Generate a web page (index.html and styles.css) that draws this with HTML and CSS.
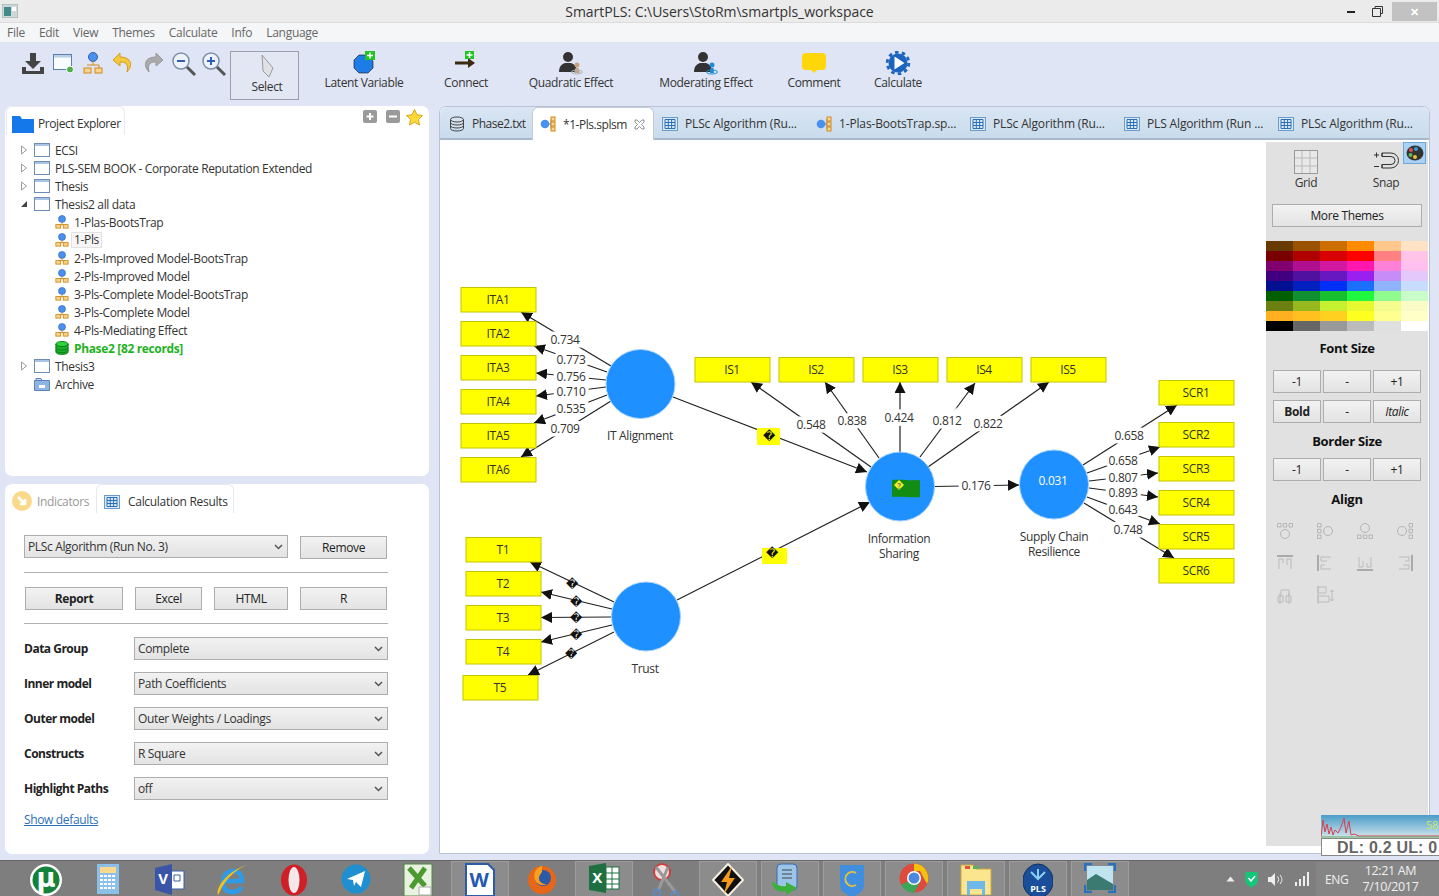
FILE: index.html
```html
<!DOCTYPE html>
<html lang="en">
<head>
<meta charset="utf-8">
<title>SmartPLS</title>
<link rel="stylesheet" href="styles.css">
</head>
<body>
<svg class="defs" width="0" height="0" aria-hidden="true">
  <defs>
    <symbol id="i-project" viewBox="0 0 16 14"><rect x=".5" y=".5" width="15" height="13" fill="#fff" stroke="#6d8db5"/><rect x="1" y="1" width="14" height="2" fill="#a9c4e4"/></symbol>
    <symbol id="i-model" viewBox="0 0 16 16"><circle cx="8" cy="4.5" r="4" fill="#4a90ee" stroke="#2d62b0" stroke-width=".7"/><path d="M8 8v3M3.500 11h9" stroke="#c8861e" fill="none"/><rect x="1" y="11" width="5.5" height="4" fill="#fbd38a" stroke="#d08a1a"/><rect x="9.500" y="11" width="5.5" height="4" fill="#fbd38a" stroke="#d08a1a"/></symbol>
    <symbol id="i-side" viewBox="0 0 16 16"><circle cx="5" cy="8" r="4.300" fill="#4a90ee"/><path d="M9 8h2M11 3v10" stroke="#888" fill="none"/><rect x="11" y="1" width="4" height="4" fill="#fbd38a" stroke="#d08a1a"/><rect x="11" y="6" width="4" height="4" fill="#fbd38a" stroke="#d08a1a"/><rect x="11" y="11" width="4" height="4" fill="#fbd38a" stroke="#d08a1a"/></symbol>
    <symbol id="i-table" viewBox="0 0 16 16"><rect x=".5" y="1.500" width="15" height="13" fill="#dbe9f6" stroke="#6d9cc8"/><path d="M3 3.500h10v9H3zM3 6.500h10M3 9.500h10M6.300 3.500v9M9.600 3.500v9" fill="none" stroke="#2a70b8"/></symbol>
    <symbol id="i-db" viewBox="0 0 16 16"><ellipse cx="8" cy="3.500" rx="6.500" ry="2.500" fill="none" stroke="#444"/><path d="M1.500 3.500v9c0 3.300 13 3.300 13 0v-9M1.500 6.500c0 3.300 13 3.300 13 0M1.500 9.500c0 3.300 13 3.300 13 0" fill="none" stroke="#444"/></symbol>
    <symbol id="i-dbgreen" viewBox="0 0 16 16"><ellipse cx="8" cy="3.500" rx="7" ry="3" fill="#2fd43a" stroke="#0c7a18"/><path d="M1 3.500v9c0 3.800 14 3.800 14 0v-9c0 3.800-14 3.800-14 0z" fill="#18b02a" stroke="#0c7a18"/><path d="M1 7.500c0 3.800 14 3.800 14 0M1 10.500c0 3.800 14 3.800 14 0" fill="none" stroke="#0c7a18"/></symbol>
    <symbol id="i-person" viewBox="0 0 24 24"><circle cx="9" cy="6" r="5" fill="#333"/><path d="M0 21c0-6 3-8 6-9h6c3 1 6 3 6 9z" fill="#333"/></symbol>
    <symbol id="i-alignnode" viewBox="0 0 20 20"><path d="M2.500 2.500h3.500v3.500H2.500zM8.200 2.500h3.500v3.500H8.200zM14 2.500h3.500v3.500H14z" fill="none" stroke="#b5b5b5"/><circle cx="10" cy="13" r="4.500" fill="none" stroke="#b5b5b5"/></symbol>
    <symbol id="i-alignbar" viewBox="0 0 20 20"><path d="M2 3h16" stroke="#aaa" stroke-width="2"/><path d="M4 16V6h4v4M12 12V6h4v10" fill="none" stroke="#bbb"/></symbol>
  </defs>
</svg>
<div class="app">
  <header class="title">
    <svg class="appicon" width="16" height="14" viewBox="0 0 16 14"><rect width="16" height="14" fill="#cfd8d8" stroke="#9aa"/><rect x="2" y="3" width="7" height="9" fill="#3f8a8a"/><rect x="10" y="3" width="4" height="4" fill="#fff"/></svg>
    <span class="title-text">SmartPLS: C:\Users\StoRm\smartpls_workspace</span>
    <div class="winctl">
      <span class="min"></span>
      <svg class="restore" width="11" height="11" viewBox="0 0 11 11"><path d="M3 2.500V.5h7.500v7H8.500M.5 2.500h8v8h-8z" fill="none" stroke="#333"/></svg>
      <span class="close">✕</span>
    </div>
  </header>
  <nav class="menu"><span>File</span><span>Edit</span><span>View</span><span>Themes</span><span>Calculate</span><span>Info</span><span>Language</span></nav>
  <div class="toolbar">
    <div class="small-tools">
      <svg class="st" width="24" height="24" viewBox="0 0 24 24"><path d="M9 2h6v8h5l-8 8-8-8h5zM1 16h4v4h14v-4h4v7H1z" fill="#444"/></svg>
      <svg class="st" width="24" height="24" viewBox="0 0 24 24"><rect x="2.500" y="3.500" width="18" height="15" fill="#f8fbff" stroke="#5d7fb0"/><rect x="3" y="4" width="17" height="2.500" fill="#b9cfe8"/><circle cx="19" cy="18.500" r="3.500" fill="#4fae4a" stroke="#fff"/></svg>
      <svg class="st" width="24" height="24" viewBox="0 0 24 24"><circle cx="12" cy="6" r="4.500" fill="#4a90ee" stroke="#2d62b0"/><path d="M12 10v4M6 14h12v3" fill="none" stroke="#d08a1a"/><rect x="3" y="17" width="7" height="5" fill="#fbd38a" stroke="#d08a1a"/><rect x="14" y="17" width="7" height="5" fill="#fbd38a" stroke="#d08a1a"/></svg>
      <svg class="st" width="24" height="24" viewBox="0 0 24 24"><path d="M9 2 2 9l7 6v-4c5 0 9 1 7 10 6-6 5-15-7-15z" fill="#f3c93f" stroke="#d59b1f"/></svg>
      <svg class="st" width="24" height="24" viewBox="0 0 24 24"><path d="M15 2l7 7-7 6v-4c-5 0-9 1-7 10-6-6-5-15 7-15z" fill="#aaa" stroke="#999"/></svg>
      <svg class="st" width="26" height="26" viewBox="0 0 26 26"><circle cx="11" cy="10" r="8" fill="#eef3fb" stroke="#7b8fa8" stroke-width="1.500"/><path d="M7 10h8" stroke="#2f5fb0" stroke-width="2"/><path d="M17 16l8 8" stroke="#555" stroke-width="3"/></svg>
      <svg class="st" width="26" height="26" viewBox="0 0 26 26"><circle cx="11" cy="10" r="8" fill="#eef3fb" stroke="#7b8fa8" stroke-width="1.500"/><path d="M7 10h8M11 6v8" stroke="#2f5fb0" stroke-width="2"/><path d="M17 16l8 8" stroke="#555" stroke-width="3"/></svg>
    </div>
    <button class="select-btn">
      <svg width="16" height="24" viewBox="0 0 16 24"><path d="M3 1l11 13-4 9-6-6z" fill="#dfe1e6" stroke="#9a9a9a"/></svg>
      <span>Select</span>
    </button>
    <div class="tool w130">
      <svg width="24" height="24" viewBox="0 0 24 24"><path d="M7 4h8l6 6v7l-5 5H7l-5-5v-8z" fill="#1e7ce8" stroke="#111" stroke-width=".6"/><rect x="13" y="0" width="10" height="9" fill="#22c422"/><path d="M18 1.500v6M15 4.500h6" stroke="#fff" stroke-width="1.500"/></svg>
      <span>Latent Variable</span>
    </div>
    <div class="tool w74">
      <svg width="24" height="24" viewBox="0 0 24 24"><path d="M1 12h14" stroke="#3a2a10" stroke-width="3"/><path d="M14 7l7 5-7 5z" fill="#3a2a10"/><rect x="11" y="0" width="9" height="8" fill="#22c422"/><path d="M15.500 1v6M12.500 4h6" stroke="#fff" stroke-width="1.500"/></svg>
      <span>Connect</span>
    </div>
    <div class="tool w136">
      <svg width="24" height="24" viewBox="0 0 24 24"><use href="#i-person"/><circle cx="18" cy="14" r="2.500" fill="#c9a37a"/><path d="M15 22l1.500-5h3L21 22z" fill="#c9a37a"/><ellipse cx="18" cy="21" rx="5.500" ry="2" fill="none" stroke="#a0b8d0"/></svg>
      <span>Quadratic Effect</span>
    </div>
    <div class="tool w134">
      <svg width="24" height="24" viewBox="0 0 24 24"><use href="#i-person"/><circle cx="18" cy="14" r="2.500" fill="#1e8ad8"/><path d="M16 22l.5-5h3l.5 5z" fill="#1e8ad8"/><ellipse cx="18" cy="21" rx="5.500" ry="2" fill="none" stroke="#1e8ad8"/></svg>
      <span>Moderating Effect</span>
    </div>
    <div class="tool w82">
      <svg width="26" height="24" viewBox="0 0 26 24"><path d="M5 2h16a4 4 0 0 1 4 4v9a4 4 0 0 1-4 4h-5l-3 3-3-3H5a4 4 0 0 1-4-4V6a4 4 0 0 1 4-4z" fill="#ffd60a"/></svg>
      <span>Comment</span>
    </div>
    <div class="tool w86">
      <svg width="26" height="24" viewBox="0 0 26 24"><circle cx="13" cy="12" r="9.500" fill="#1b64c0"/><circle cx="13" cy="12" r="10.800" fill="none" stroke="#1b64c0" stroke-width="2.800" stroke-dasharray="3.500 3.300"/><path d="M9.500 5.500l10 6.500-10 6.500z" fill="#fff"/></svg>
      <span>Calculate</span>
    </div>
  </div>
  <main class="workspace">
    <div class="leftcol">
      <section class="panel">
        <div class="panel-head">
          <div class="ptab">
            <svg width="22" height="18" viewBox="0 0 22 18"><path d="M0 1h8l2 3h12v14H0z" fill="#1478ea"/></svg>
            <span>Project Explorer</span>
          </div>
          <div class="ptools">
            <svg width="14" height="14" viewBox="0 0 14 14"><rect width="14" height="13" rx="2" fill="#9a9a9a"/><path d="M7 3v7M3.500 6.500h7" stroke="#fff" stroke-width="2"/></svg>
            <svg width="14" height="14" viewBox="0 0 14 14"><rect width="14" height="13" rx="2" fill="#9a9a9a"/><path d="M3 6.500h8" stroke="#fff" stroke-width="2"/></svg>
            <svg width="17" height="17" viewBox="0 0 17 17"><path d="M8.500.5l2.500 5.300 5.500.7-4 4 1 5.500-5-2.700-5 2.700 1-5.500-4-4 5.500-.7z" fill="#ffd83a" stroke="#d8a818"/></svg>
          </div>
        </div>
        <ul class="tree">
          <li class="row"><svg class="tw" width="8" height="10" viewBox="0 0 8 10"><path d="M1.500 1l5 4-5 4z" fill="#fff" stroke="#999"/></svg><svg class="ic" width="16" height="14"><use href="#i-project"/></svg><span>ECSI</span></li>
          <li class="row"><svg class="tw" width="8" height="10" viewBox="0 0 8 10"><path d="M1.500 1l5 4-5 4z" fill="#fff" stroke="#999"/></svg><svg class="ic" width="16" height="14"><use href="#i-project"/></svg><span>PLS-SEM BOOK - Corporate Reputation Extended</span></li>
          <li class="row"><svg class="tw" width="8" height="10" viewBox="0 0 8 10"><path d="M1.500 1l5 4-5 4z" fill="#fff" stroke="#999"/></svg><svg class="ic" width="16" height="14"><use href="#i-project"/></svg><span>Thesis</span></li>
          <li class="row"><svg class="tw" width="8" height="10" viewBox="0 0 8 10"><path d="M7 2v6H1z" fill="#444"/></svg><svg class="ic" width="16" height="14"><use href="#i-project"/></svg><span>Thesis2 all data</span></li>
          <li class="row child"><svg class="ic" width="14" height="14"><use href="#i-model"/></svg><span>1-Plas-BootsTrap</span></li>
          <li class="row child"><svg class="ic" width="14" height="14"><use href="#i-model"/></svg><span class="picked">1-Pls</span></li>
          <li class="row child"><svg class="ic" width="14" height="14"><use href="#i-model"/></svg><span>2-Pls-Improved Model-BootsTrap</span></li>
          <li class="row child"><svg class="ic" width="14" height="14"><use href="#i-model"/></svg><span>2-Pls-Improved Model</span></li>
          <li class="row child"><svg class="ic" width="14" height="14"><use href="#i-model"/></svg><span>3-Pls-Complete Model-BootsTrap</span></li>
          <li class="row child"><svg class="ic" width="14" height="14"><use href="#i-model"/></svg><span>3-Pls-Complete Model</span></li>
          <li class="row child"><svg class="ic" width="14" height="14"><use href="#i-model"/></svg><span>4-Pls-Mediating Effect</span></li>
          <li class="row child dataset"><svg class="ic" width="14" height="14"><use href="#i-dbgreen"/></svg><span>Phase2 [82 records]</span></li>
          <li class="row"><svg class="tw" width="8" height="10" viewBox="0 0 8 10"><path d="M1.500 1l5 4-5 4z" fill="#fff" stroke="#999"/></svg><svg class="ic" width="16" height="14"><use href="#i-project"/></svg><span>Thesis3</span></li>
          <li class="row nest"><svg class="ic" width="16" height="14" viewBox="0 0 16 14"><path d="M.5 3.500h15v10H.5z" fill="#8fb4e4" stroke="#5d82b8"/><path d="M2 1.500h5l1 2H2z" fill="#c4d8f0" stroke="#5d82b8"/><path d="M5 8h6v3H5z" fill="#fff"/></svg><span>Archive</span></li>
        </ul>
      </section>
      <section class="panel">
        <div class="panel-head">
          <div class="gtab">
            <svg width="20" height="20" viewBox="0 0 20 20"><circle cx="10" cy="10" r="10" fill="#fbd98a"/><path d="M6 6l7 7M13 8v5H8" stroke="#fff" stroke-width="2.500" fill="none"/></svg>
            <span>Indicators</span>
          </div>
          <div class="ptab calc">
            <svg width="16" height="16"><use href="#i-table"/></svg>
            <span>Calculation Results</span>
          </div>
        </div>
        <div class="form">
          <div class="frow top">
            <div class="sel wide"><span>PLSc Algorithm (Run No. 3)</span><svg width="9" height="6" viewBox="0 0 9 6"><path d="M1 1l3.500 3.500L8 1" fill="none" stroke="#555" stroke-width="1.500"/></svg></div>
            <button class="btn rm">Remove</button>
          </div>
          <hr class="rule first">
          <div class="frow actions">
            <button class="btn report">Report</button>
            <button class="btn excel">Excel</button>
            <button class="btn html">HTML</button>
            <button class="btn r">R</button>
          </div>
          <hr class="rule second">
          <div class="opts">
            <div class="opt"><label>Data Group</label><div class="sel"><span>Complete</span><svg width="9" height="6" viewBox="0 0 9 6"><path d="M1 1l3.500 3.500L8 1" fill="none" stroke="#555" stroke-width="1.500"/></svg></div></div>
            <div class="opt"><label>Inner model</label><div class="sel"><span>Path Coefficients</span><svg width="9" height="6" viewBox="0 0 9 6"><path d="M1 1l3.500 3.500L8 1" fill="none" stroke="#555" stroke-width="1.500"/></svg></div></div>
            <div class="opt"><label>Outer model</label><div class="sel"><span>Outer Weights / Loadings</span><svg width="9" height="6" viewBox="0 0 9 6"><path d="M1 1l3.500 3.500L8 1" fill="none" stroke="#555" stroke-width="1.500"/></svg></div></div>
            <div class="opt"><label>Constructs</label><div class="sel"><span>R Square</span><svg width="9" height="6" viewBox="0 0 9 6"><path d="M1 1l3.500 3.500L8 1" fill="none" stroke="#555" stroke-width="1.500"/></svg></div></div>
            <div class="opt"><label>Highlight Paths</label><div class="sel"><span>off</span><svg width="9" height="6" viewBox="0 0 9 6"><path d="M1 1l3.500 3.500L8 1" fill="none" stroke="#555" stroke-width="1.500"/></svg></div></div>
          </div>
          <a class="defaults" href="#">Show defaults</a>
        </div>
      </section>
    </div>
    <section class="editor">
      <div class="tabs">
        <div class="tab t1"><svg width="16" height="16"><use href="#i-db"/></svg><span>Phase2.txt</span></div>
        <div class="tab active"><svg width="16" height="16"><use href="#i-side"/></svg><span>*1-Pls.splsm</span><svg class="x" width="11" height="11" viewBox="0 0 11 11"><path d="M1 1h2l2.500 2.500L8 1h2v2L7.500 5.500 10 8v2H8L5.500 7.500 3 10H1V8l2.500-2.500L1 3z" fill="#fff" stroke="#777" stroke-width=".8"/></svg></div>
        <div class="tab"><svg width="16" height="16"><use href="#i-table"/></svg><span>PLSc Algorithm (Ru...</span></div>
        <div class="tab"><svg width="16" height="16"><use href="#i-side"/></svg><span>1-Plas-BootsTrap.sp...</span></div>
        <div class="tab"><svg width="16" height="16"><use href="#i-table"/></svg><span>PLSc Algorithm (Ru...</span></div>
        <div class="tab"><svg width="16" height="16"><use href="#i-table"/></svg><span>PLS Algorithm (Run ...</span></div>
        <div class="tab"><svg width="16" height="16"><use href="#i-table"/></svg><span>PLSc Algorithm (Ru...</span></div>
      </div>
      <div class="editor-body">
        <svg class="canvas" width="826" height="714" viewBox="440 140 826 714">
          <defs>
            <marker id="ah" markerUnits="userSpaceOnUse" markerWidth="12" markerHeight="11" refX="11" refY="5.500" orient="auto"><path d="M0 0l11 5.500L0 11z" fill="#111"/></marker>
          </defs>
          <g class="links">
            <line x1="611" y1="366" x2="521" y2="312"/><line x1="607" y1="372" x2="534" y2="346"/><line x1="606" y1="380" x2="536" y2="373"/><line x1="606" y1="387" x2="536" y2="396"/><line x1="607" y1="395" x2="534" y2="423"/><line x1="611" y1="401" x2="521" y2="457"/>
            <line x1="673" y1="397" x2="867" y2="472"/>
            <line x1="871" y1="467" x2="751" y2="382"/><line x1="879" y1="458" x2="825" y2="382"/><line x1="900" y1="452" x2="900" y2="382"/><line x1="920" y1="457" x2="975" y2="383"/><line x1="928" y1="467" x2="1049" y2="382"/>
            <line x1="935" y1="486.500" x2="1019" y2="485"/>
            <line x1="1083" y1="465" x2="1177" y2="405"/><line x1="1087" y1="473" x2="1160" y2="447"/><line x1="1089" y1="481" x2="1158" y2="473"/><line x1="1089" y1="488" x2="1158" y2="497"/><line x1="1087" y1="497" x2="1160" y2="524"/><line x1="1084" y1="503" x2="1174" y2="558"/>
            <line x1="614" y1="602" x2="530" y2="562"/><line x1="612" y1="609" x2="541" y2="592"/><line x1="611" y1="617" x2="541" y2="617.500"/><line x1="612" y1="625" x2="541" y2="642"/><line x1="614" y1="632" x2="528" y2="675"/>
            <line x1="677" y1="600" x2="870" y2="502"/>
          </g>
          <g class="nodes">
            <circle cx="640.500" cy="384" r="34.500"/><circle cx="900" cy="486.500" r="34.500"/><circle cx="1054" cy="484.500" r="34.500"/><circle cx="646" cy="616.500" r="34.500"/>
          </g>
          <path class="flag" d="M892 480c9-1 18 1 28 0v17c-10 1-19-1-28 0z"/>
          <path class="flagmark" d="M899 480l5 5-5 5-5-5z"/>
          <text class="flagq" x="899" y="485">?</text>
          <g class="boxes">
            <rect x="461" y="287.500" width="75" height="24.500"/><rect x="461" y="321.500" width="75" height="24.500"/><rect x="461" y="355.500" width="75" height="24.500"/><rect x="461" y="389.500" width="75" height="24.500"/><rect x="461" y="423.500" width="75" height="24.500"/><rect x="461" y="457.500" width="75" height="24.500"/>
            <rect x="695" y="357.500" width="75" height="24.500"/><rect x="779" y="357.500" width="75" height="24.500"/><rect x="863" y="357.500" width="75" height="24.500"/><rect x="947" y="357.500" width="75" height="24.500"/><rect x="1031" y="357.500" width="75" height="24.500"/>
            <rect x="1159" y="380.500" width="75" height="24.500"/><rect x="1159" y="422.500" width="75" height="24.500"/><rect x="1159" y="456.500" width="75" height="24.500"/><rect x="1159" y="490.500" width="75" height="24.500"/><rect x="1159" y="524.500" width="75" height="24.500"/><rect x="1159" y="558.500" width="75" height="24.500"/>
            <rect x="466" y="537.500" width="75" height="24.500"/><rect x="466" y="571.500" width="75" height="24.500"/><rect x="466" y="605.500" width="75" height="24.500"/><rect x="466" y="639.500" width="75" height="24.500"/><rect x="463" y="675.500" width="75" height="24.500"/>
          </g>
          <rect class="hl" x="757" y="428" width="23" height="17"/><rect class="hl" x="762" y="548" width="25" height="16"/>
          <g class="t-node" transform="translate(0,-1)">
            <text x="498" y="300">ITA1</text><text x="498" y="334">ITA2</text><text x="498" y="368">ITA3</text><text x="498" y="402">ITA4</text><text x="498" y="436">ITA5</text><text x="498" y="470">ITA6</text>
            <text x="732" y="370">IS1</text><text x="816" y="370">IS2</text><text x="900" y="370">IS3</text><text x="984" y="370">IS4</text><text x="1068" y="370">IS5</text>
            <text x="1196" y="393">SCR1</text><text x="1196" y="435">SCR2</text><text x="1196" y="469">SCR3</text><text x="1196" y="503">SCR4</text><text x="1196" y="537">SCR5</text><text x="1196" y="571">SCR6</text>
            <text x="503" y="550">T1</text><text x="503" y="584">T2</text><text x="503" y="618">T3</text><text x="503" y="652">T4</text><text x="500" y="688">T5</text>
            <text x="640" y="436">IT Alignment</text><text x="899" y="539">Information</text><text x="899" y="554">Sharing</text><text x="1054" y="537">Supply Chain</text><text x="1054" y="552">Resilience</text><text x="645" y="669">Trust</text>
            <text class="inner" x="1053" y="481">0.031</text>
          </g>
          <g class="t-w" transform="translate(0,-1)">
            <text x="565" y="340">0.734</text><text x="571" y="360">0.773</text><text x="571" y="377">0.756</text><text x="571" y="392">0.710</text><text x="571" y="409">0.535</text><text x="565" y="429">0.709</text>
            <text x="811" y="425">0.548</text><text x="852" y="421">0.838</text><text x="899" y="418">0.424</text><text x="947" y="421">0.812</text><text x="988" y="424">0.822</text>
            <text x="976" y="486">0.176</text>
            <text x="1129" y="436">0.658</text><text x="1123" y="461">0.658</text><text x="1123" y="478">0.807</text><text x="1123" y="493">0.893</text><text x="1123" y="510">0.643</text><text x="1128" y="530">0.748</text>
          </g>
          <g class="t-q">
            <text x="572" y="584">�</text><text x="576" y="602">�</text><text x="576" y="618">�</text><text x="576" y="635">�</text><text x="571" y="654">�</text>
            <text x="769" y="436">�</text><text x="772" y="553">�</text>
          </g>
        </svg>
        <aside class="side">
          <button class="palette-btn" aria-label="Themes"><svg width="18" height="16" viewBox="0 0 18 16"><ellipse cx="9" cy="8" rx="8.500" ry="7.500" fill="#333"/><circle cx="5" cy="5" r="2" fill="#e05050"/><circle cx="10" cy="4" r="2" fill="#35a0d8"/><circle cx="4.500" cy="10" r="2" fill="#5cb85c"/><circle cx="9" cy="12" r="2" fill="#f0c030"/></svg></button>
          <div class="side-top">
            <div class="sidetool">
              <svg width="24" height="24" viewBox="0 0 24 24"><rect x=".5" y=".5" width="23" height="23" fill="#e8e8e8" stroke="#999"/><path d="M8 1v22M16 1v22M1 8h22M1 16h22" stroke="#bbb"/></svg>
              <span>Grid</span>
            </div>
            <div class="sidetool">
              <svg width="26" height="24" viewBox="0 0 26 24"><path d="M9 3h9a7.500 7.500 0 0 1 0 15H9v-3.500h9a4 4 0 0 0 0-8H9z" fill="none" stroke="#333"/><path d="M9 3v3.500M9 14.500V18" stroke="#333"/><path d="M1 5h5M3.500 2.500v5M1 16.500h5" stroke="#333"/></svg>
              <span>Snap</span>
            </div>
          </div>
          <button class="btn more">More Themes</button>
          <div class="palette">
            <i style="background:#663a00"></i><i style="background:#9a5200"></i><i style="background:#cc6e00"></i><i style="background:#ff8c00"></i><i style="background:#ffc78c"></i><i style="background:#ffe3c4"></i>
            <i style="background:#7a0000"></i><i style="background:#b00000"></i><i style="background:#d80000"></i><i style="background:#ff0000"></i><i style="background:#ff8080"></i><i style="background:#ffc4e8"></i>
            <i style="background:#800070"></i><i style="background:#b0108f"></i><i style="background:#d018a0"></i><i style="background:#ff18b0"></i><i style="background:#ff80d8"></i><i style="background:#ffc0f0"></i>
            <i style="background:#400080"></i><i style="background:#5010a0"></i><i style="background:#6818c0"></i><i style="background:#9a20f0"></i><i style="background:#c88cf8"></i><i style="background:#e4c8fc"></i>
            <i style="background:#001090"></i><i style="background:#0020c0"></i><i style="background:#0030f8"></i><i style="background:#1a70f8"></i><i style="background:#90b4fc"></i><i style="background:#c8dcfc"></i>
            <i style="background:#006000"></i><i style="background:#109030"></i><i style="background:#18c030"></i><i style="background:#20f840"></i><i style="background:#90fc90"></i><i style="background:#c8fcc8"></i>
            <i style="background:#6a8010"></i><i style="background:#98b820"></i><i style="background:#c4f030"></i><i style="background:#e8f830"></i><i style="background:#f4fc90"></i><i style="background:#fafcc8"></i>
            <i style="background:#ffb020"></i><i style="background:#ffc020"></i><i style="background:#ffd020"></i><i style="background:#ffff20"></i><i style="background:#ffff90"></i><i style="background:#ffffc8"></i>
            <i style="background:#000000"></i><i style="background:#666666"></i><i style="background:#999999"></i><i style="background:#bbbbbb"></i><i style="background:#e0e0e0"></i><i style="background:#ffffff"></i>
          </div>
          <h3 class="h-font">Font Size</h3>
          <div class="trio a"><button class="btn">-1</button><button class="btn">-</button><button class="btn">+1</button></div>
          <div class="trio b"><button class="btn bold">Bold</button><button class="btn">-</button><button class="btn ital">Italic</button></div>
          <h3 class="h-border">Border Size</h3>
          <div class="trio c"><button class="btn">-1</button><button class="btn">-</button><button class="btn">+1</button></div>
          <h3 class="h-border">Align</h3>
          <div class="aligns">
            <svg width="20" height="20" viewBox="0 0 20 20"><use href="#i-alignnode"/></svg>
            <svg width="20" height="20" viewBox="0 0 20 20"><use href="#i-alignnode" transform="rotate(-90 10 10)"/></svg>
            <svg width="20" height="20" viewBox="0 0 20 20"><use href="#i-alignnode" transform="rotate(180 10 10)"/></svg>
            <svg width="20" height="20" viewBox="0 0 20 20"><use href="#i-alignnode" transform="rotate(90 10 10)"/></svg>
            <svg width="20" height="20" viewBox="0 0 20 20"><use href="#i-alignbar"/></svg>
            <svg width="20" height="20" viewBox="0 0 20 20"><use href="#i-alignbar" transform="rotate(-90 10 10)"/></svg>
            <svg width="20" height="20" viewBox="0 0 20 20"><use href="#i-alignbar" transform="rotate(180 10 10)"/></svg>
            <svg width="20" height="20" viewBox="0 0 20 20"><use href="#i-alignbar" transform="rotate(90 10 10)"/></svg>
            <svg width="20" height="20" viewBox="0 0 20 20"><path d="M3 11h5v6H3zM11 11h5v6h-5zM6 11V5h8v6M5 8v11M14 8v11" fill="none" stroke="#bbb"/></svg>
            <svg width="20" height="20" viewBox="0 0 20 20"><path d="M3 2h8v6H3zM3 11h11v6H3zM3 1v18M17 5v11M15.500 7L17 5l1.500 2M15.500 14l1.500 2 1.500-2" fill="none" stroke="#bbb"/></svg>
          </div>
        </aside>
      </div>
    </section>
  </main>
  <footer class="taskbar">
    <div class="task"><svg width="34" height="34" viewBox="0 0 34 34"><circle cx="17" cy="17" r="16" fill="#fff"/><circle cx="17" cy="17" r="13.500" fill="#13823a"/><text class="g-mu" x="17" y="24">µ</text></svg></div>
    <div class="task"><svg width="24" height="32" viewBox="0 0 24 32"><rect width="22" height="30" x="1" y="1" fill="#8cc0e8"/><rect x="4" y="4" width="16" height="6" fill="#ffd890"/><path d="M4 13h16M4 17h16M4 21h16M4 25h16" stroke="#fff" stroke-width="2" stroke-dasharray="3 1"/></svg></div>
    <div class="task"><svg width="32" height="32" viewBox="0 0 32 32"><path d="M16 8h14v18H16z" fill="#fff" stroke="#3a5fa8"/><path d="M20 12h6v6h-6z" fill="none" stroke="#3a5fa8"/><path d="M1 5l17-4v31L1 27z" fill="#3a55a8"/><text class="g-v" x="9" y="21">V</text></svg></div>
    <div class="task"><svg width="34" height="34" viewBox="0 0 34 34"><path d="M8 18h19c0-7-4-10-9-10S8 12 8 19s4 10 10 10c4 0 7-2 8-5" fill="none" stroke="#2f9ae8" stroke-width="4.500"/><path d="M3 32C0 24 14 7 32 2c-8 3-16 9-23 19-3 4-4 8-6 11z" fill="#f2c21a"/></svg></div>
    <div class="task"><svg width="30" height="34" viewBox="0 0 30 34"><ellipse cx="15" cy="17" rx="13" ry="15.500" fill="#d01f26"/><ellipse cx="15" cy="17" rx="5.500" ry="13" fill="#f5e8e8"/></svg></div>
    <div class="task"><svg width="30" height="32" viewBox="0 0 30 32"><circle cx="15" cy="16" r="14.500" fill="#1f8fd0"/><path d="M6 16l18-8-4 16-5-5-2 4-1-6z" fill="#fff"/></svg></div>
    <div class="task"><svg width="30" height="34" viewBox="0 0 30 34"><rect x="1" y="1" width="28" height="32" fill="#e9f2e0" stroke="#4a8a3a"/><path d="M6 5l16 18M22 5L8 25" stroke="#4a9a30" stroke-width="5"/><path d="M16 24h12v8H16z" fill="#fff" stroke="#aaa"/></svg></div>
    <div class="task on"><svg width="30" height="34" viewBox="0 0 30 34"><path d="M1 1h22l6 6v26H1z" fill="#fff" stroke="#2a5aa8" stroke-width="2"/><text class="g-w" x="14" y="24">W</text></svg></div>
    <div class="task"><svg width="30" height="34" viewBox="0 0 30 34"><circle cx="15" cy="17" r="14" fill="#e8661a"/><circle cx="16" cy="15" r="8" fill="#2a5aa8"/><path d="M15 3c-7 2-9 8-7 14 2 5 8 6 12 4-5 0-8-2-8-6 0-3 2-4 3-6z" fill="#f8a01e"/></svg></div>
    <div class="task on"><svg width="32" height="30" viewBox="0 0 32 30"><rect x="13" y="4" width="18" height="22" fill="#fff" stroke="#1e7040"/><path d="M18 4v22M24 4v22M13 10h18M13 16h18M13 21h18" stroke="#1e7040"/><path d="M1 3l17-3v30L1 27z" fill="#1e7040"/><text class="g-x" x="9" y="20">X</text></svg></div>
    <div class="task"><svg width="30" height="36" viewBox="0 0 30 36"><circle cx="11" cy="9" r="8" fill="#f3dede" stroke="#c84040" stroke-width="2"/><path d="M5 4l20 26M17 4L7 28" stroke="#9a9a9a" stroke-width="3"/><circle cx="6" cy="30" r="3.500" fill="none" stroke="#5a8ac8" stroke-width="2"/><circle cx="24" cy="32" r="3.500" fill="none" stroke="#5a8ac8" stroke-width="2"/></svg></div>
    <div class="task on"><svg width="32" height="34" viewBox="0 0 32 34"><path d="M16 1l15 16-15 16L1 17z" fill="#111" stroke="#f5f0e0" stroke-width="2"/><path d="M20 3L9 19h6l-3 12 11-16h-6z" fill="#f59a18"/></svg></div>
    <div class="task on"><svg class="nudge" width="32" height="34" viewBox="0 0 32 34"><rect x="7" y="1" width="20" height="26" rx="4" fill="#9ac4e8" stroke="#3a6ab0"/><path d="M12 7h10M12 11h10M12 15h10" stroke="#444"/><path d="M2 18c0 8 6 12 14 10v4l11-7-11-6v4c-5 1-9-1-14-5z" fill="#3cb03c"/></svg></div>
    <div class="task on"><svg width="26" height="34" viewBox="0 0 26 34"><path d="M1 2h24v20c0 6-6 10-12 12C7 32 1 28 1 22z" fill="#3f8ee0"/><path d="M17 10a7 7 0 1 0 0 12" fill="none" stroke="#e0c040" stroke-width="2"/></svg></div>
    <div class="task on"><svg width="30" height="30" viewBox="0 0 30 30"><circle cx="15" cy="15" r="14.500" fill="#dd4b3e"/><path d="M15 15L2.500 22A14.500 14.500 0 0 0 15 29.500L22 17z" fill="#3aa757"/><path d="M15 .5A14.500 14.500 0 0 1 28 21L21 8H15z" fill="#f4c20d"/><path d="M8 19L2.500 22A14.500 14.500 0 0 0 15 29.500L21 19z" fill="#3aa757"/><circle cx="15" cy="15" r="7" fill="#fff"/><circle cx="15" cy="15" r="5.500" fill="#4a89dc"/></svg></div>
    <div class="task on"><svg width="32" height="32" viewBox="0 0 32 32"><path d="M1 2h12l3 4h15v26H1z" fill="#fbe58f" stroke="#cda83e"/><path d="M5 3h5v3H5z" fill="#e85040"/><path d="M13 3h6v3h-6z" fill="#5cb05c"/><path d="M7 18h18v14h-3v-6H10v6H7z" fill="#6fb8e8"/></svg></div>
    <div class="task on"><svg width="30" height="36" viewBox="0 0 30 36"><ellipse cx="15" cy="18" rx="15" ry="17" fill="#1b4e9a" stroke="#0e2e5c"/><path d="M15 6v10M8 9l7 7 7-7" stroke="#8cd0f0" stroke-width="2" fill="none"/><text class="g-pls" x="15" y="29">PLS</text></svg></div>
    <div class="task on"><svg width="32" height="30" viewBox="0 0 32 30"><rect x="3" y="3" width="26" height="24" fill="#bfe4f0"/><path d="M3 17l9-6 17 10v6H3z" fill="#3a7a70"/><path d="M1 8V1h7M24 1h7v7M31 22v7h-7M8 29H1v-7" fill="none" stroke="#2a70c0" stroke-width="2.500"/></svg></div>
    <div class="tray">
      <svg width="9" height="6" viewBox="0 0 9 6"><path d="M.5 5.500l4-5 4 5z" fill="#eee"/></svg>
      <svg width="13" height="17" viewBox="0 0 13 17"><path d="M.5 1h12v9c0 3-3 5-6 6.500C3.500 15 .5 13 .5 10z" fill="#12c878"/><path d="M3.500 7l2.500 3 4-5" stroke="#fff" stroke-width="1.500" fill="none"/></svg>
      <svg width="16" height="15" viewBox="0 0 16 15"><path d="M0 5h3l4-4v13l-4-4H0z" fill="#eee"/><path d="M9.500 4.500c1.500 2 1.500 4 0 6M12 3c2.500 3 2.500 6 0 9" fill="none" stroke="#eee"/></svg>
      <svg width="16" height="14" viewBox="0 0 16 14"><path d="M1 10h2v4H1zM5 7h2v7H5zM9 4h2v10H9zM13 0h2v14h-2z" fill="#eee"/></svg>
      <span class="eng">ENG</span>
      <div class="clock"><span>12:21 AM</span><span>7/10/2017</span></div>
    </div>
  </footer>
</div>
<div class="netmeter">
  <svg class="net-graph" width="118" height="23" viewBox="0 0 118 23"><polyline points="0,22 2,5 4,17 6,9 8,19 10,12 12,20 14,15 17,18 20,12 23,3 25,18 28,6 30,20 33,19 38,21 118,21" fill="none" stroke="#d84050"/><polyline points="0,22 118,22" stroke="#60a860"/><text class="net-num" x="105" y="14">58</text></svg>
  <div class="net-text">DL: 0.2 UL: 0</div>
</div>
<div class="ghost"></div>
</body>
</html>
```
FILE: styles.css
```css
* { box-sizing: border-box; }
html, body { margin: 0; padding: 0; }
body {
  width: 1439px; height: 896px; overflow: hidden; position: relative;
  font-family: "Open Sans", "Noto Sans", sans-serif;
  font-size: 12px; letter-spacing: -.35px; color: #333; background: #dfe5f4;
}
.defs { position: absolute; }
button { font: inherit; letter-spacing: inherit; color: inherit; }
.app { display: flex; flex-direction: column; height: 896px; }

.title { height: 23px; background: #ebebeb; border-bottom: 1px solid #dcdcdc; display: flex; align-items: center; position: relative; padding-left: 2px; }
.title-text { position: absolute; left: 0; right: 0; text-align: center; font-size: 14px; letter-spacing: -.05px; color: #333; }
.winctl { margin-left: auto; display: flex; align-items: center; height: 22px; position: relative; padding-right: 2px; align-self: flex-start; }
.min { width: 8px; height: 2px; background: #222; margin-right: 17px; margin-top: 2px; }
.restore { margin-right: 9px; }
.close { width: 45px; height: 19px; background: #c2c2c2; color: #fff; text-align: center; line-height: 19px; font-size: 11px; font-weight: 700; }

.menu { height: 19px; background: #f5f6f7; display: flex; gap: 14px; padding-left: 7px; align-items: center; color: #666; letter-spacing: -.28px; }

.toolbar { height: 64px; background: #dfe5f4; display: flex; padding: 9px 0 0 18px; align-items: flex-start; }
.small-tools { display: flex; width: 212px; }
.st { width: 30px; display: block; }
.select-btn { width: 69px; height: 49px; border: 1px solid #98a0ac; background: #e2e7f3; padding: 2px 0 0 5px; display: flex; flex-direction: column; align-items: center; gap: 0; }
.tool { display: flex; flex-direction: column; align-items: center; gap: 0; }
.tool span { line-height: 16px; }
.w130 { width: 130px; } .w74 { width: 74px; } .w136 { width: 136px; } .w134 { width: 134px; } .w82 { width: 82px; } .w86 { width: 86px; }

.workspace { height: 754px; display: flex; padding: 0 0 6px 5px; }
.leftcol { width: 424px; display: flex; flex-direction: column; gap: 8px; }
.panel { height: 370px; background: #fff; border-radius: 7px; }
.panel-head { height: 29px; display: flex; align-items: stretch; padding-left: 1px; position: relative; }
.ptab { width: 119px; border: 1px solid #e6e9ef; border-bottom: 0; border-radius: 6px 6px 0 0; display: flex; align-items: center; gap: 4px; padding: 5px 0 0 5px; color: #333; background: #fff; letter-spacing: -.42px; }
.ptools { position: absolute; left: 358px; top: 4px; display: flex; gap: 9px; align-items: flex-start; }
.ptools svg:last-child { margin-left: -3px; margin-top: -1px; }
.tree { list-style: none; margin: 6px 0 0; padding: 0; }
.row { height: 18px; display: flex; align-items: center; padding-left: 15px; }
.tw { margin-right: 6px; }
.row .ic { margin-right: 5px; }
.row.child { padding-left: 50px; }
.row.child .ic { margin-right: 5px; }
.row.nest { padding-left: 29px; }
.picked { background: #f6f6f6; border: 1px solid #e2e2e2; padding: 0 2px; margin-left: -3px; line-height: 14px; }
.dataset span { color: #1fb31f; font-weight: 700; letter-spacing: -.35px; }

.gtab { display: flex; align-items: center; gap: 5px; width: 91px; padding: 5px 0 0 6px; color: #999; }
.ptab.calc { width: 138px; gap: 8px; padding-left: 7px; margin-left: -1px; letter-spacing: -.3px; }
.form { padding: 22px 0 0 19px; }
.frow { display: flex; }
.frow.top { align-items: flex-start; }
.sel { height: 23px; border: 1px solid #adadad; background: linear-gradient(#f2f2f2, #e3e3e3); display: flex; align-items: center; justify-content: space-between; padding: 0 4px 0 3px; flex: 1; color: #333; }
.sel.wide { flex: none; width: 264px; }
.btn { height: 23px; border: 1px solid #adadad; background: linear-gradient(#f2f2f2, #e3e3e3); padding: 0; color: #222; }
.rm { width: 87px; margin: 1px 0 0 12px; }
.rule { border: 0; border-top: 1px solid #b0b0b0; width: 364px; margin: 0; }
.rule.first { margin-top: 13px; }
.actions { margin-top: 14px; padding-left: 1px; gap: 12px; }
.report { width: 98px; font-weight: 700; } .excel { width: 67px; } .html { width: 74px; } .r { width: 87px; }
.rule.second { margin-top: 13px; }
.opts { margin-top: 13px; display: flex; flex-direction: column; gap: 12px; width: 364px; }
.opt { display: flex; align-items: center; }
.opt label { width: 110px; font-weight: 700; color: #222; letter-spacing: -.5px; }
.defaults { display: block; margin-top: 12px; color: #2a6fb8; line-height: 16px; }

.editor { margin-left: 10px; width: 991px; background: #fff; border: 1px solid #b9c3d6; border-radius: 7px 7px 0 0; display: flex; flex-direction: column; height: 748px; }
.tabs { height: 33px; display: flex; background: linear-gradient(#d9e5f3, #c9dcec); border-bottom: 2px solid #a9b8cc; border-radius: 7px 7px 0 0; }
.tab { width: 154px; display: flex; align-items: center; gap: 7px; padding: 2px 0 0 8px; white-space: nowrap; letter-spacing: -.15px; }
.tab.t1 { width: 92px; padding-left: 9px; letter-spacing: -.5px; }
.tab.active { width: 122px; background: #fff; border: 1px solid #c4cad6; border-bottom: 0; border-radius: 6px 6px 0 0; height: 33px; position: relative; padding: 0 0 0 7px; gap: 7px; letter-spacing: -.45px; }
.tab .x { margin-left: 0; }
.editor-body { flex: 1; display: flex; min-height: 0; }
.canvas { display: block; flex: none; }
.side { width: 162px; margin: 2px 0 7px; background: #e1e1e1; position: relative; }
.palette-btn { position: absolute; right: 2px; top: 0; width: 23px; height: 22px; padding: 0; background: #a9d1f5; border: 1px solid #6ea8d8; display: flex; align-items: center; justify-content: center; }
.side-top { height: 62px; display: flex; }
.sidetool { width: 80px; display: flex; flex-direction: column; align-items: center; padding-top: 8px; gap: 1px; color: #333; }
.sidetool span { line-height: 16px; }
.more { display: block; width: 150px; margin-left: 6px; }
.palette { margin-top: 14px; display: grid; grid-template-columns: repeat(6, 27px); grid-auto-rows: 10px; }
.palette i { display: block; }
.side h3 { margin: 0; text-align: center; font-size: 13px; font-weight: 700; color: #111; line-height: 18px; letter-spacing: -.3px; }
.h-font { margin-top: 8px !important; }
.h-border { margin-top: 9px !important; }
.trio { display: grid; grid-template-columns: repeat(3, 48px); gap: 2px; padding-left: 7px; }
.trio.a { margin-top: 13px; } .trio.b { margin-top: 7px; } .trio.c { margin-top: 8px; }
.bold { font-weight: 700; } .ital { font-style: italic; }
.aligns { margin-top: 13px; padding-left: 9px; display: grid; grid-template-columns: repeat(4, 40px); grid-auto-rows: 32px; }

.links line { stroke: #222; stroke-width: 1.200; marker-end: url(#ah); }
.nodes circle { fill: #1e90ff; stroke: #9fd0ff; stroke-width: 1; }
.boxes rect { fill: #ffff00; stroke: #c4c400; stroke-width: 1; }
.hl { fill: #ffff00; }
.flag { fill: #128c12; }
.flagmark { fill: #f0f020; }
.flagq { font-size: 8px; font-weight: 700; fill: #777; text-anchor: middle; dominant-baseline: central; }
.canvas text { text-anchor: middle; dominant-baseline: central; }
.t-node text { fill: #333; }
.t-node .inner { fill: #fff; }
.t-w text { fill: #333; stroke: #fff; stroke-width: 7px; paint-order: stroke; stroke-linejoin: miter; }
.t-q text { font-family: "DejaVu Sans", sans-serif; font-size: 12px; fill: #111; }

.taskbar { height: 36px; background: #7e7e7e; border-top: 1px solid #666; display: flex; padding-left: 15px; overflow: hidden; color: #fff; position: relative; }
.task { width: 62px; flex: none; height: 36px; display: flex; align-items: flex-start; justify-content: center; padding-top: 2px; }
.task.on { background: #8c8c8c; border: 1px solid #9e9e9e; border-bottom: 0; margin: 0 2px; width: 58px; padding-top: 1px; }
.nudge { margin-right: 8px; }
.g-mu { font-size: 26px; font-weight: 700; fill: #fff; text-anchor: middle; font-family: "DejaVu Sans", sans-serif; }
.g-v { font-size: 15px; font-weight: 700; fill: #fff; text-anchor: middle; }
.g-w { font-size: 20px; font-weight: 700; fill: #2458b0; text-anchor: middle; }
.g-x { font-size: 15px; font-weight: 700; fill: #fff; text-anchor: middle; }
.g-pls { font-size: 9px; font-weight: 700; fill: #fff; text-anchor: middle; letter-spacing: 0; }
.tray { position: absolute; left: 1226px; top: 0; height: 36px; display: flex; align-items: center; gap: 10px; }
.eng { margin-left: 5px; font-size: 12px; color: #eee; }
.clock { display: flex; flex-direction: column; align-items: center; margin-left: 4px; line-height: 16px; font-size: 12.500px; color: #eee; }

.netmeter { position: absolute; left: 1321px; top: 815px; width: 118px; height: 41px; overflow: hidden; }
.net-graph { display: block; background: linear-gradient(#4a9cc8, #d4e6ec); }
.net-num { font-size: 11px; fill: #c8e86a; }
.net-text { height: 18px; background: #fff; border: 1px solid #888; border-right: 0; padding-left: 15px; font: 700 16px/17px "Liberation Sans", sans-serif; letter-spacing: .2px; color: #666; white-space: nowrap; overflow: hidden; }
.ghost { position: absolute; left: 1316px; top: 862px; width: 123px; height: 34px; background: rgba(255,255,255,.06); }
```
